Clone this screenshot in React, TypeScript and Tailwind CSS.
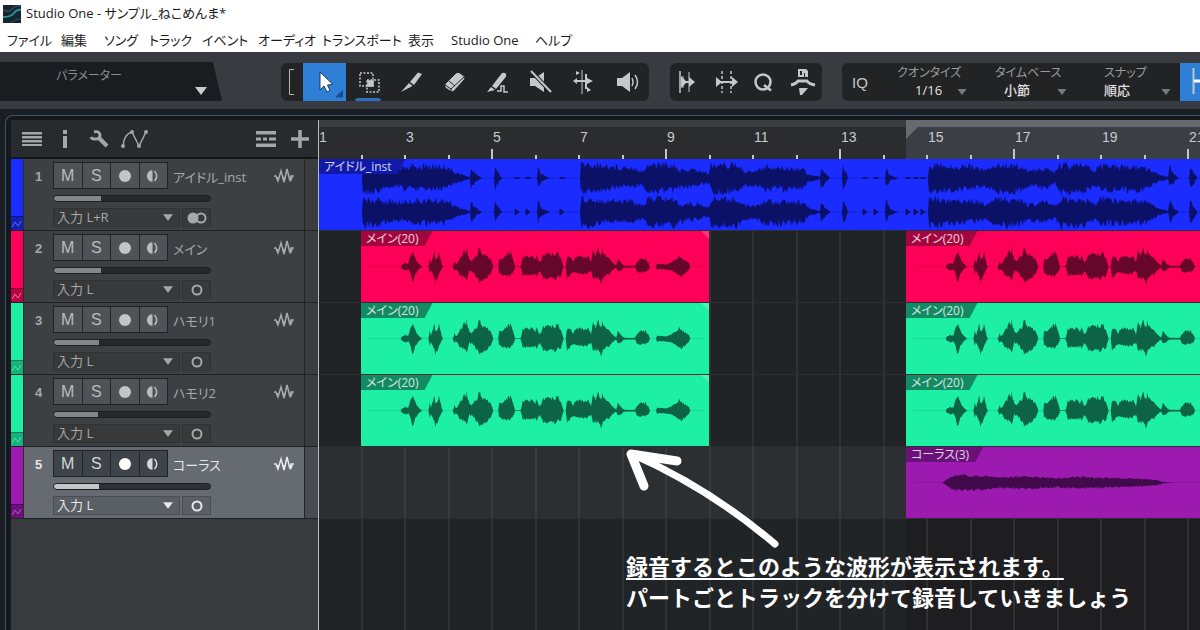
import React, { useState } from 'react';
import clsx from 'clsx';

type Point = [number, number, number?];

interface Clip {
  label: string;
  start: number;
  width: number;
  wave: 'inst' | 'vocal' | 'chorus';
}

interface Track {
  id: number;
  name: string;
  input: string;
  stereo?: boolean;
  volume: number;
  strip: string;
  foot: string;
  clip: string;
  tab: string;
  ink: string;
  clips: Clip[];
}

const VOCAL_CLIPS: Clip[] = [
  { label: 'メイン(20)', start: 42, width: 348, wave: 'vocal' },
  { label: 'メイン(20)', start: 587, width: 348, wave: 'vocal' },
];

const GREEN = {
  strip: 'bg-[#1df0a5]',
  foot: 'bg-[#16b27c] text-[#4fe0b0]',
  clip: 'bg-[#1df0a5]',
  tab: 'bg-[#128a62]',
  ink: 'text-[#0d6346]',
};

const TRACKS: Track[] = [
  {
    id: 1, name: 'アイドル_inst', input: '入力 L+R', stereo: true, volume: 30,
    strip: 'bg-[#1a2cff]', foot: 'bg-[#1420b4] text-[#5f6cf0]', clip: 'bg-[#1a2cff]', tab: 'bg-[#1119a8]', ink: 'text-[#0b1166]',
    clips: [{ label: 'アイドル_inst', start: 0, width: 900, wave: 'inst' }],
  },
  {
    id: 2, name: 'メイン', input: '入力 L', volume: 30,
    strip: 'bg-[#ff0059]', foot: 'bg-[#b80442] text-[#ff6b9c]', clip: 'bg-[#ff0059]', tab: 'bg-[#a3063f]', ink: 'text-[#66062a]',
    clips: VOCAL_CLIPS,
  },
  { id: 3, name: 'ハモリ1', input: '入力 L', volume: 29, ...GREEN, clips: VOCAL_CLIPS },
  { id: 4, name: 'ハモリ2', input: '入力 L', volume: 28, ...GREEN, clips: VOCAL_CLIPS },
  {
    id: 5, name: 'コーラス', input: '入力 L', volume: 29,
    strip: 'bg-[#9c1ab0]', foot: 'bg-[#6d0f7c] text-[#b45cc4]', clip: 'bg-[#9c1ab0]', tab: 'bg-[#6a1079]', ink: 'text-[#410a4b]',
    clips: [{ label: 'コーラス(3)', start: 587, width: 348, wave: 'chorus' }],
  },
];

// [x, height above centre, height below centre]
const INST: Point[] = [
  [43, 0], [44, 15, 18], [59, 15, 18], [65, 14, 13], [83, 12, 10], [85, 14, 15], [109, 15, 15], [129, 15, 13], [133, 9, 8],
  [139, 6, 6], [144, 4, 4], [149, 2], [151, 1], [152, 14, 12], [157, 5], [163, 0], [175, 0], [176, 15, 13], [178, 10], [182, 1],
  [184, 0], [218, 0], [219, 16, 13], [222, 5], [231, 0], [261, 0], [262, 18, 18], [271, 17, 17], [281, 16, 15], [301, 14, 12],
  [311, 15, 12], [324, 9], [327, 12, 16], [331, 18, 18], [355, 17, 17], [361, 9, 13], [371, 11], [381, 9], [390, 6],
  [392, 18, 18], [419, 16, 17], [426, 9, 10], [438, 9], [446, 15, 15], [466, 13, 15], [484, 12, 13], [489, 5], [499, 2],
  [501, 1], [502, 13, 12], [507, 5], [511, 0], [523, 0], [524, 14], [527, 8], [529, 0], [566, 0], [567, 14, 12], [571, 4], [579, 0],
  [609, 0], [610, 18, 18], [631, 14, 16], [651, 16, 13], [666, 10], [673, 13, 15], [676, 18, 18], [701, 15, 17], [709, 9, 10],
  [726, 13], [736, 7], [741, 17, 18], [766, 15, 17], [776, 10], [784, 18, 15], [801, 14, 16], [826, 13, 15], [833, 9], [839, 5],
  [849, 1], [851, 15, 12], [855, 5], [860, 0], [870, 0], [871, 14], [877, 3], [879, 0],
];

const HITS = [198, 209, 243, 546, 557, 589, 597, 604];

const VOCAL: Point[] = [
  [138, 4], [150, 14], [160, 10], [168, 42, 32], [174, 46, 60], [182, 28, 25], [190, 10], [202, 0], [220, 0], [224, 28, 22],
  [228, 12], [238, 54, 34], [241, 24, 50], [247, 30, 46], [252, 52, 22], [260, 8], [264, 0], [293, 0], [299, 17], [303, 8], [315, 30],
  [325, 46, 36], [335, 62, 48], [343, 28, 14], [350, 18], [358, 33, 25], [365, 40], [372, 64, 52], [382, 46], [395, 38, 37],
  [405, 31, 29], [413, 8], [415, 0], [430, 0], [432, 22], [445, 35, 28], [458, 44, 33], [466, 52, 30], [472, 37, 26], [478, 10],
  [480, 1], [496, 1], [498, 5], [503, 33], [515, 35, 28], [528, 38, 33], [540, 26], [545, 44, 40], [552, 20], [556, 16],
  [565, 40, 46], [580, 45], [595, 47, 42], [610, 44, 38], [618, 33], [624, 8], [626, 0], [632, 0], [636, 38, 46], [645, 33, 28],
  [655, 20], [662, 37, 22], [680, 34, 27], [700, 38, 22], [708, 16], [714, 54, 38], [722, 38], [730, 60, 40], [738, 36, 56],
  [742, 56, 44], [748, 46, 36], [760, 28], [770, 18], [778, 8], [784, 4], [788, 26, 15], [796, 15], [808, 4], [815, 3],
  [840, 3], [846, 18], [856, 27, 19], [872, 27, 19], [880, 14], [885, 0], [903, 0], [906, 10], [925, 9], [940, 10],
  [955, 19, 15], [970, 35, 29], [975, 41, 34], [982, 27, 31], [992, 22, 24], [1002, 12], [1006, 0],
];

const CHORUS: Point[] = [
  [110, 0], [122, 12], [140, 24], [165, 28], [195, 25], [235, 24], [255, 21], [290, 18], [355, 23], [395, 20], [455, 16],
  [525, 21], [575, 18], [655, 15], [715, 12], [755, 9], [770, 3], [785, 1], [810, 0],
];

const noise = (n: number) => {
  const v = Math.sin(n * 12.9898) * 43758.5453;
  return v - Math.floor(v);
};

function wavePath(points: Point[], centre: number, step: number, rough: number) {
  const top: string[] = [];
  const bottom: string[] = [];
  for (let i = 0; i < points.length - 1; i++) {
    const [x0, u0, d0 = u0] = points[i];
    const [x1, u1, d1 = u1] = points[i + 1];
    for (let x = x0; x < x1; x += step) {
      const t = (x - x0) / (x1 - x0);
      const up = (u0 + (u1 - u0) * t) * (1 - rough * noise(x + centre));
      const down = (d0 + (d1 - d0) * t) * (1 - rough * noise(x * 3 + centre + 7));
      top.push(`${x} ${(centre - up).toFixed(1)}`);
      bottom.unshift(`${x} ${(centre + down).toFixed(1)}`);
    }
  }
  return `M${top.join('L')}L${bottom.join('L')}Z`;
}

const Waveform: React.FC<{ kind: Clip['wave'] }> = ({ kind }) => {
  if (kind === 'inst') {
    return (
      <svg width="900" height="71" viewBox="0 0 900 71" fill="currentColor" aria-hidden="true">
        <path d={wavePath(INST, 19, 1, 0.5)} />
        <path d={wavePath(INST, 53, 1, 0.5)} />
        <path d="M43 19H900M43 53H900" stroke="currentColor" strokeWidth="1" opacity="0.35" />
        {HITS.map((x) => (
          <g key={x}>
            <ellipse cx={x} cy="19" rx="3" ry="1" />
            <path d={`M${x - 2} 50l4 3l-4 3z`} stroke="currentColor" />
          </g>
        ))}
      </svg>
    );
  }
  return (
    <svg width="348" height="71" viewBox="0 0 1044 213" fill="currentColor" aria-hidden="true">
      <path d="M20 107H1030" stroke="currentColor" strokeWidth="2" opacity="0.3" />
      {kind === 'vocal' ? (
        <path transform="translate(-18 0)" d={wavePath(VOCAL, 107, 3, 0.32)} />
      ) : (
        <path d={wavePath(CHORUS, 107, 3, 0.35)} />
      )}
    </svg>
  );
};

const Caret: React.FC<{ className?: string }> = ({ className }) => (
  <svg width="12" height="8" viewBox="0 0 12 8" fill="currentColor" className={clsx('pointer-events-none', className)} aria-hidden="true">
    <path d="M0 0H12L6 8Z" />
  </svg>
);

const MENUS = ['ファイル', '編集', 'ソング', 'トラック', 'イベント', 'オーディオ', 'トランスポート', '表示', 'Studio One', 'ヘルプ'];

const TOOLS: { label: string; icon: React.ReactNode }[] = [
  {
    label: '矢印',
    icon: <path d="M9 4L9 22L13 18L16 24L19 22.500L16.500 17L22 16.500Z" fill="#fff" stroke="#16395f" strokeWidth="1" />,
  },
  {
    label: '範囲',
    icon: (
      <g fill="none" stroke="currentColor" strokeWidth="1.500">
        <path d="M6 5H19V18H6Z" strokeDasharray="2 1.500" />
        <path d="M13 12H25V24H13Z" strokeDasharray="2 1.500" />
        <path d="M14 13H19V18H14Z" fill="currentColor" />
      </g>
    ),
  },
  {
    label: '分割',
    icon: (
      <g fill="currentColor">
        <path d="M21 4.500L25 6L17 17L13 14Z" />
        <path d="M12 15L15.500 18L4 24Z" />
      </g>
    ),
  },
  {
    label: '消しゴム',
    icon: (
      <g fill="currentColor" stroke="#222324" strokeWidth="1">
        <path d="M5 16L16 5Q18 3.500 20 5L24 8Q26 10 24 12L14 23Q12 25 10 23L5.500 20Q4 18 5 16Z" />
        <path d="M5 17L11 21L24 9M11 21V24M9 13L15 18" fill="none" />
      </g>
    ),
  },
  {
    label: 'ペイント',
    icon: (
      <g fill="currentColor">
        <path d="M19 5Q22 4 23 6Q24 8 22 10L13 21L9 18Z" />
        <path d="M8 19L12 22L4 24Z" />
        <path d="M14 23H18V18H21V24H25" fill="none" stroke="currentColor" strokeWidth="1.500" />
      </g>
    ),
  },
  {
    label: 'ミュート',
    icon: (
      <g fill="currentColor">
        <path d="M4 10H9L18 4V24L9 18H4Z" />
        <path d="M5 3L25 24" stroke="#222324" strokeWidth="4" />
        <path d="M5 3L25 24" stroke="currentColor" strokeWidth="2" />
      </g>
    ),
  },
  {
    label: 'ベンド',
    icon: (
      <g fill="currentColor">
        <path d="M13 2V26" stroke="currentColor" strokeWidth="1" />
        <path d="M17 6V21" stroke="currentColor" strokeWidth="2" />
        <path d="M7 13H22" stroke="currentColor" strokeWidth="2" />
        <path d="M4 13L8 10V16ZM24 13L18 10V16ZM7 3L11 5L7 7ZM18 19L22 22L18 24Z" />
      </g>
    ),
  },
  {
    label: '試聴',
    icon: (
      <g fill="currentColor">
        <path d="M5 10H10L18 4V24L10 18H5Z" />
        <path d="M20 10Q22 14 20 18M23 7Q28 14 23 21" fill="none" stroke="currentColor" strokeWidth="1.500" />
      </g>
    ),
  },
];

const EDIT_TOOLS: { label: string; icon: React.ReactNode }[] = [
  {
    label: 'トランジェント',
    icon: (
      <g fill="currentColor">
        <path d="M5 3V25" stroke="currentColor" strokeWidth="1.500" />
        <path d="M8 8V20M14 4V24" stroke="currentColor" strokeWidth="1" />
        <path d="M6 8L12 14L6 20ZM14 9L20 14L14 19Z" />
        <path d="M6 14H18" stroke="currentColor" strokeWidth="2" />
      </g>
    ),
  },
  {
    label: 'ストレッチ',
    icon: (
      <g fill="currentColor">
        <path d="M9 3V25M18 3V25" stroke="currentColor" strokeWidth="1.500" strokeDasharray="3 2" />
        <path d="M5 14H22" stroke="currentColor" strokeWidth="2" />
        <path d="M3 9L9 14L3 19ZM19 9L25 14L19 19Z" />
      </g>
    ),
  },
  {
    label: 'クオンタイズ適用',
    icon: (
      <g fill="none" stroke="currentColor" strokeWidth="2.500">
        <circle cx="12" cy="14" r="7.500" />
        <path d="M13 17L20 22.500" />
      </g>
    ),
  },
  {
    label: 'マクロ',
    icon: (
      <g fill="currentColor">
        <path d="M9 1H17L19 3V9H9ZM11 3V7H13V3ZM15 5V9H16V5Z" fillRule="evenodd" />
        <path d="M2 17Q7 16 9 13H18Q20 16 26 17" fill="none" stroke="currentColor" strokeWidth="3" />
        <path d="M10 20H19L13 27H11Z" />
      </g>
    ),
  },
];

const ToolIcon: React.FC<{ children: React.ReactNode }> = ({ children }) => (
  <svg width="28" height="28" viewBox="0 0 28 28" aria-hidden="true">
    {children}
  </svg>
);

interface FieldProps {
  label: string;
  value: string;
  className: string;
  inset: string;
}

const ToolbarField: React.FC<FieldProps> = ({ label, value, className, inset }) => (
  <label className={clsx('relative flex flex-col items-start justify-center leading-[18px]', className)}>
    <span className="text-xs text-[#9b9d9f]">{label}</span>
    <select className={clsx('w-full appearance-none bg-transparent text-[13px] leading-[18px] font-medium text-[#e2e2e2]', inset)}>
      <option>{value}</option>
    </select>
    <Caret className="absolute right-0 bottom-[6px] h-[6px] w-[10px] text-[#77797b]" />
  </label>
);

const Toolbar: React.FC = () => {
  const [tool, setTool] = useState('矢印');
  return (
    <div className="flex h-[57px] shrink-0 items-center overflow-hidden bg-[#383b3f] pt-[3px] pb-[1px]">
      <button className="relative h-[39px] w-[222px] shrink-0 bg-[#1a1d1f] pb-[12px] text-left text-xs text-[#8b8d8f] [clip-path:polygon(0_0,213px_0,222px_100%,0_100%)]">
        <span className="pl-[56px]">パラメーター</span>
        <Caret className="absolute right-[15px] bottom-[6px] text-[#c9cbcc]" />
      </button>

      <div className="ml-[59px] flex h-[38px] w-[368px] shrink-0 rounded-md bg-[#222324] text-[#c6c7c8]">
        <svg width="22" height="38" viewBox="0 0 22 38" fill="none" stroke="#b5b7a8" strokeWidth="1" aria-hidden="true">
          <path d="M13 6.500H8.500V31.500H13" />
        </svg>
        {TOOLS.map(({ label, icon }, i) => (
          <button
            key={label}
            aria-label={label}
            onClick={() => setTool(label)}
            className={clsx('relative flex w-[43px] items-center justify-center', tool === label && 'bg-[#2f7fd6]')}
          >
            <ToolIcon>{icon}</ToolIcon>
            {i === 0 && <span className="absolute right-[3px] bottom-[3px] size-2 bg-[#16508f] [clip-path:polygon(100%_0,100%_100%,0_100%)]" />}
            {i === 1 && <span className="absolute bottom-0 left-[9px] h-[3px] w-[26px] rounded-t bg-[#2f6fc0]" />}
          </button>
        ))}
      </div>

      <div className="ml-[21px] flex h-[38px] w-[152px] shrink-0 rounded-md bg-[#222324] text-[#c6c7c8]">
        {EDIT_TOOLS.map(({ label, icon }) => (
          <button key={label} aria-label={label} className="flex flex-1 items-center justify-center">
            <ToolIcon>{icon}</ToolIcon>
          </button>
        ))}
      </div>

      <div className="ml-[20px] flex h-[38px] shrink-0 rounded-l-md bg-[#222324]">
        <button className="w-[36px] pt-[3px] font-['Liberation_Sans',sans-serif] text-[15px] text-[#c6c7c8]">IQ</button>
        <ToolbarField label="クオンタイズ" value="1/16" inset="pl-[18px]" className="ml-[19px] w-[70px]" />
        <ToolbarField label="タイムベース" value="小節" inset="pl-[9px]" className="ml-[28px] w-[72px]" />
        <ToolbarField label="スナップ" value="順応" inset="pl-0" className="ml-[37px] w-[67px]" />
        <button aria-label="スナップ切替" className="ml-[9px] w-[43px] bg-[#2f7fd6] text-white">
          <svg width="28" height="38" viewBox="0 0 28 38" fill="none" stroke="currentColor" aria-hidden="true">
            <path d="M13.500 5V31" stroke="#b9c9c9" strokeWidth="2" />
            <path d="M14 18H28" strokeWidth="3" />
          </svg>
        </button>
      </div>
    </div>
  );
};

const TrackTools: React.FC = () => (
  <div className="flex h-[39px] items-center border-b-2 border-[#131516] bg-[#282b2d] pl-[11px] text-[#a4a7a8]">
    <button aria-label="トラックリスト">
      <svg width="20" height="16" viewBox="0 0 20 16" fill="currentColor">
        <path d="M0 1H20V3.500H0ZM0 5H20V7.500H0ZM0 9H20V11.500H0ZM0 13H20V15H0Z" />
      </svg>
    </button>
    <button aria-label="インスペクター" className="ml-[20px]">
      <svg width="6" height="20" viewBox="0 0 6 20" fill="currentColor">
        <path d="M1 1H5V5H1ZM1 7H5V19H1Z" />
      </svg>
    </button>
    <button aria-label="設定" className="ml-[20px]">
      <svg width="22" height="20" viewBox="0 0 22 20" fill="none" stroke="currentColor">
        <path d="M6 3Q11 1.500 12 6Q12 10 8 10Q4 10.500 3 8" strokeWidth="3" />
        <path d="M11 9L19 17" strokeWidth="4" />
      </svg>
    </button>
    <button aria-label="オートメーション" className="ml-[10px]">
      <svg width="30" height="20" viewBox="0 0 30 20" fill="none" stroke="currentColor" strokeWidth="1.500">
        <path d="M3 17Q4 5 12 3L19 17L26 3" />
        <g fill="currentColor" stroke="none">
          <circle cx="3" cy="17" r="2" />
          <circle cx="12" cy="3" r="2" />
          <circle cx="19" cy="17" r="2" />
          <circle cx="26" cy="3" r="2" />
        </g>
      </svg>
    </button>
    <button aria-label="表示" className="mr-[15px] ml-auto">
      <svg width="20" height="16" viewBox="0 0 20 16" fill="currentColor">
        <path d="M0 0H20V3.500H0ZM0 6.500H5V9.500H0ZM7 6.500H11V9.500H7ZM13 6.500H20V9.500H13ZM0 12.500H20V16H0Z" />
      </svg>
    </button>
    <button aria-label="トラックを追加" className="mr-[9px]">
      <svg width="18" height="18" viewBox="0 0 18 18" stroke="currentColor" strokeWidth="3.500">
        <path d="M9 0V18M0 9H18" />
      </svg>
    </button>
  </div>
);

const TrackHeader: React.FC<{ track: Track; selected: boolean; onSelect: () => void }> = ({ track, selected, onSelect }) => {
  const fill = selected ? '#c3c5c6' : '#84878a';
  const rest = selected ? '#2e3138' : '#26292a';
  return (
    <div onClick={onSelect} className="flex h-[72px] border-b border-[#1f2122]">
      <div className={clsx('flex w-[12px] shrink-0 flex-col justify-end', track.strip)}>
        <span className={clsx('flex h-[14px] items-center justify-center border-t border-black/30', track.foot)}>
          <svg width="10" height="8" viewBox="0 0 10 8" fill="none" stroke="currentColor">
            <path d="M0 7L3 2L6 6L9 1" />
          </svg>
        </span>
      </div>

      <div
        className={clsx(
          'grid flex-1 grid-cols-[29px_158px_1fr] border-l border-[#2a2c2d] pt-[3px]',
          selected ? 'bg-[#666a71] text-[#e6e8e9]' : 'bg-[#3d4042] text-[#a6a9aa]',
        )}
      >
        <span className="pt-[7px] text-center font-['Liberation_Sans',sans-serif] text-[13px] leading-4 font-bold">{track.id}</span>
        <div>
          <div className="flex items-start">
            <div
              className={clsx(
                'flex h-[27px] w-[115px] shrink-0 divide-x divide-[#232526] border border-[#202223] font-["Liberation_Sans",sans-serif] text-base leading-[25px]',
                selected ? 'bg-[#3f434a] text-[#d5d7d8]' : 'bg-[#505355] text-[#b9bbbc]',
              )}
            >
              <button className="flex-1">M</button>
              <button className="flex-1">S</button>
              <button aria-label="録音待機" className="flex flex-1 items-center justify-center">
                <span className={clsx('size-3 rounded-full', selected ? 'bg-white' : 'bg-[#c2c4c5]')} />
              </button>
              <button aria-label="モニター" className="flex flex-1 items-center justify-center">
                <svg width="12" height="12" viewBox="0 0 12 12" fill="currentColor">
                  <path d="M5.500 0V12Q0 11 0 6Q0 1 5.500 0Z" />
                  <path d="M7.500 1Q12 6 7.500 11" fill="none" stroke="currentColor" strokeWidth="1.500" />
                </svg>
              </button>
            </div>
            <span className="pt-[5px] pl-[5px] text-[13px] leading-5 whitespace-nowrap">{track.name}</span>
          </div>
          <input
            type="range"
            aria-label={`${track.name} 音量`}
            readOnly
            value={track.volume}
            className="mt-[6px] block h-[7px] w-[158px] appearance-none rounded-full border border-[#1d1f20] [&::-webkit-slider-thumb]:size-0 [&::-webkit-slider-thumb]:appearance-none"
            style={{ background: `linear-gradient(90deg, ${fill} ${track.volume}%, ${rest} ${track.volume}%)` }}
          />
          <div className="mt-[6px] flex h-[19px] gap-[2px]">
            <label className="relative w-[127px]">
              <select
                aria-label={`${track.name} 入力`}
                className={clsx(
                  'block h-[19px] w-full appearance-none border pl-[3px] text-[13px] leading-[17px]',
                  selected ? 'border-[#4a4d53] bg-[#5a5e65]' : 'border-[#2f3133] bg-[#37393b]',
                )}
              >
                <option>{track.input}</option>
              </select>
              <Caret className="absolute top-[6px] right-[7px] h-[7px] w-[10px]" />
            </label>
            <button
              aria-label="チャンネル"
              className={clsx(
                'flex w-[29px] items-center justify-center border',
                selected ? 'border-[#4a4d53] bg-[#5a5e65]' : 'border-[#2f3133] bg-[#37393b]',
              )}
            >
              {track.stereo ? (
                <svg width="20" height="12" viewBox="0 0 20 12" stroke="currentColor" strokeWidth="2">
                  <circle cx="6" cy="6" r="4.500" fill="currentColor" />
                  <circle cx="14" cy="6" r="4.500" fill="none" />
                </svg>
              ) : (
                <svg width="12" height="12" viewBox="0 0 12 12" fill="none" stroke="currentColor" strokeWidth="2">
                  <circle cx="6" cy="6" r="4.500" />
                </svg>
              )}
            </button>
          </div>
        </div>
        <svg width="20" height="16" viewBox="0 0 20 16" className="mt-[6px] mr-[10px] justify-self-end" fill="none" stroke="currentColor" strokeWidth="1.500" aria-hidden="true">
          <path d="M0 8H2L4 13L7 3L10 14L13 1L16 13L17 8H20" />
          <path d="M2 9H5L3.500 14ZM8 9H12L10 15ZM15 9H19L17 14Z" fill="currentColor" stroke="none" />
        </svg>
      </div>
      <div className={clsx('w-[14px] border-l border-[#232526]', selected ? 'bg-[#484b52]' : 'bg-[#3a3c3e]')} />
    </div>
  );
};

const Ruler: React.FC = () => (
  <div className="relative flex h-[39px] flex-col overflow-hidden bg-[#2a2c2e]">
    <div className="h-[7px] shrink-0 bg-[#3a3d3f]" />
    <div className="absolute inset-y-0 right-0 left-[587px] bg-[#3b3e45]">
      <div className="h-[7px] bg-[#676b6f]" />
      <span className="block size-3 bg-[#676b6f] [clip-path:polygon(0_0,100%_0,0_100%)]" />
    </div>
    <div className="relative flex flex-1">
      {Array.from({ length: 11 }, (_, i) => (
        <div key={i} className="flex h-full w-[87px] shrink-0 flex-col justify-between">
          <span className="pt-[2px] font-['Liberation_Sans',sans-serif] text-sm leading-4 text-[#c9cbcc]">{i * 2 + 1}</span>
          <span className="flex items-end">
            <span className="h-[4px] flex-1 border-r-2 border-[#c4c6c7]" />
            <span className={clsx('flex-1 border-r-2 border-[#c4c6c7]', i % 2 ? 'h-[10px]' : 'h-[4px]')} />
          </span>
        </div>
      ))}
    </div>
  </div>
);

const ClipView: React.FC<{ clip: Clip; track: Track; offset: number }> = ({ clip, track, offset }) => (
  <div
    className={clsx('relative h-[71px] shrink-0 overflow-hidden', track.clip, track.ink)}
    style={{ width: clip.width, marginLeft: offset }}
  >
    <Waveform kind={clip.wave} />
    <span
      className={clsx(
        'absolute top-0 left-0 pr-[14px] pl-[5px] text-xs leading-[15px] text-white/80 [clip-path:polygon(0_0,100%_0,calc(100%-8px)_100%,0_100%)]',
        track.tab,
      )}
    >
      {clip.label}
    </span>
    <span className="absolute top-0 right-0 size-2 bg-white/20 [clip-path:polygon(0_0,100%_0,100%_100%)]" />
  </div>
);

const Annotation: React.FC = () => (
  <div className="absolute top-[326px] left-[300px] font-['Noto_Sans_CJK_JP',sans-serif] text-[22px] leading-[31px] font-bold whitespace-nowrap text-white [font-feature-settings:normal]">
    <svg width="170" height="104" viewBox="0 0 170 104" fill="none" stroke="#fff" strokeWidth="7" strokeLinecap="round" strokeLinejoin="round" aria-hidden="true">
      <path d="M156 98Q90 42 13 8" />
      <path d="M58 15L12 8L25 40" strokeWidth="9" />
    </svg>
    <p className="pl-[7px]">
      <span className="underline decoration-2 underline-offset-[3px] [text-decoration-skip-ink:none]">録音するとこのような波形が表示されます。</span>
    </p>
    <p className="pl-[7px]">パートごとトラックを分けて録音していきましょう</p>
  </div>
);

const App: React.FC = () => {
  const [selected, setSelected] = useState(5);

  return (
    <div className="flex min-h-screen flex-col overflow-hidden bg-[#1c1f21] font-['Open_Sans','Noto_Sans_CJK_JP',sans-serif] [font-feature-settings:'palt']">
      <header className="bg-white text-[#1b1b1b]">
        <div className="flex h-[28px] items-center gap-[5px] pl-[3px] text-[13px]">
          <svg width="18" height="18" viewBox="0 0 18 18" aria-hidden="true">
            <path d="M0 0H18V18H0Z" fill="#14252e" />
            <path d="M0 5Q6 8 9 4T18 1" fill="none" stroke="#2b4452" strokeWidth="2" />
            <path d="M0 12Q8 12 11 8T18 5" fill="none" stroke="#2a8f9c" strokeWidth="2" />
            <path d="M8 18Q11 14 18 14" fill="none" stroke="#1f5563" strokeWidth="1" />
          </svg>
          <h1>Studio One - サンプル_ねこめんま*</h1>
        </div>
        <nav className="grid h-[24px] grid-cols-[54px_43px_45px_53px_56px_64px_86px_43px_84px_auto] pl-[7px] text-[13px]">
          {MENUS.map((m) => (
            <button key={m} className="text-left leading-6 whitespace-nowrap">
              {m}
            </button>
          ))}
        </nav>
      </header>

      <Toolbar />

      <main className="mt-[6px] ml-[5px] flex flex-1 rounded-tl-lg border-t border-l border-[#37557a] bg-[#15191b] pt-[4px] pl-[5px]">
        {/* Track list */}
        <section className="w-[308px] shrink-0 border-r border-[#b9bbbc] bg-[#383b3e]">
          <TrackTools />
          {TRACKS.map((t) => (
            <TrackHeader key={t.id} track={t} selected={t.id === selected} onSelect={() => setSelected(t.id)} />
          ))}
        </section>

        {/* Arrangement */}
        <section className="relative flex min-w-0 flex-1 flex-col overflow-hidden bg-[#212426]">
          <Ruler />
          <div className="relative flex-1">
            <div className="absolute inset-y-0 right-0 left-[587px] bg-[#1e1e21]" />
            <div className="absolute inset-0 bg-[repeating-linear-gradient(90deg,transparent_0_42px,#2e3234_42px_44px,transparent_44px_85px,#2e3234_85px_87px)]" />
            {TRACKS.map((t) => (
              <div key={t.id} className={clsx('relative flex h-[72px] overflow-hidden border-b border-[#2c2f31]', t.id === selected && 'bg-white/5')}>
                {t.clips.map((c, i) => {
                  const prev = t.clips[i - 1];
                  return <ClipView key={i} clip={c} track={t} offset={c.start - (prev ? prev.start + prev.width : 0)} />;
                })}
              </div>
            ))}
          </div>
          <Annotation />
        </section>
      </main>
    </div>
  );
};

export default App;
